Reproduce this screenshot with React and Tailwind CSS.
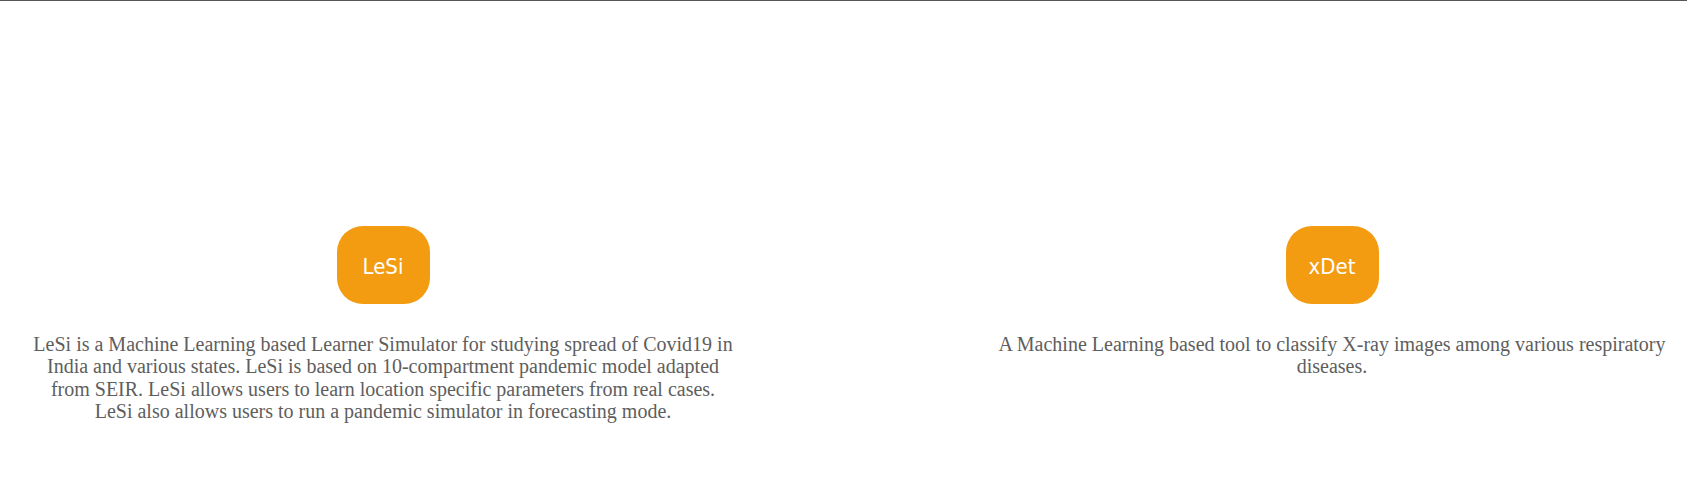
import React from "react";

const tools = [
  {
    name: "LeSi",
    desc: "LeSi is a Machine Learning based Learner Simulator for studying spread of Covid19 in India and various states. LeSi is based on 10-compartment pandemic model adapted from SEIR. LeSi allows users to learn location specific parameters from real cases. LeSi also allows users to run a pandemic simulator in forecasting mode.",
    col: "ml-[30px] w-[706px]",
  },
  {
    name: "xDet",
    desc: "A Machine Learning based tool to classify X-ray images among various respiratory diseases.",
    col: "ml-auto mr-[5px] w-[700px]",
  },
];

export default function App() {
  return (
    <div className="h-[499px] w-full bg-white border-t border-[#555] overflow-hidden">
      <div className="flex pt-[225px]">
        {tools.map((t) => (
          <div key={t.name} className={`${t.col} flex flex-col items-center`}>
            <div className="w-[93px] h-[78px] rounded-[26px] bg-[#f39c12] flex items-center justify-center pt-[2px]">
              <span className="text-white text-[22px] font-['DejaVu_Sans_Condensed','DejaVu_Sans',sans-serif]">
                {t.name}
              </span>
            </div>
            <p className="mt-[29px] text-center text-[20px] leading-[22.3px] text-[#5e5e5e] font-['Liberation_Serif',serif]">
              {t.desc}
            </p>
          </div>
        ))}
      </div>
    </div>
  );
}
